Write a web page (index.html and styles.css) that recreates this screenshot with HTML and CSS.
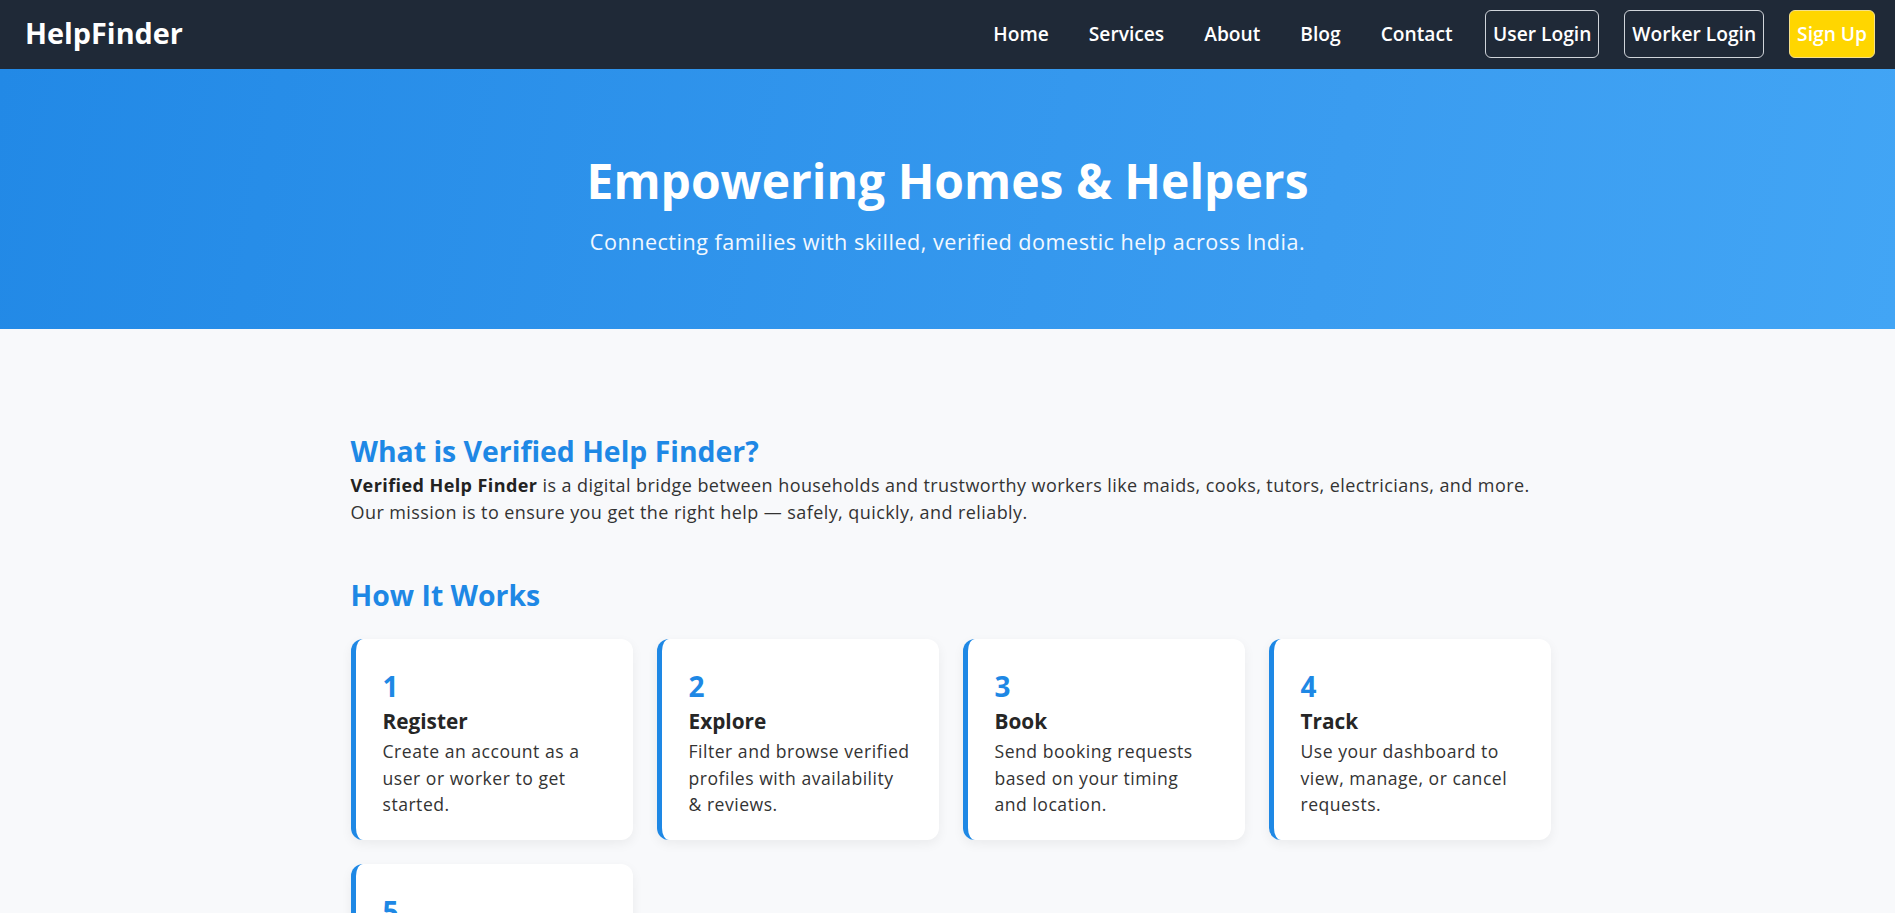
FILE: index.html
```html
<!DOCTYPE html>
<html lang="en">
<head>
<meta charset="utf-8">
<title>HelpFinder</title>
<link rel="stylesheet" href="styles.css">
</head>
<body>
<header class="navbar">
  <div class="logo">HelpFinder</div>
  <nav class="nav-links">
    <a class="nav-link" href="#">Home</a>
    <a class="nav-link" href="#">Services</a>
    <a class="nav-link" href="#">About</a>
    <a class="nav-link" href="#">Blog</a>
    <a class="nav-link" href="#">Contact</a>
    <a class="nav-btn" href="#">User Login</a>
    <a class="nav-btn" href="#">Worker Login</a>
    <a class="nav-btn signup" href="#">Sign Up</a>
  </nav>
</header>

<section class="hero">
  <h1 class="hero-title">Empowering Homes &amp; Helpers</h1>
  <p class="hero-sub">Connecting families with skilled, verified domestic help across India.</p>
</section>

<main class="main">
  <div class="container">
    <h2 class="section-title">What is Verified Help Finder?</h2>
    <p class="intro"><strong>Verified Help Finder</strong> is a digital bridge between households and trustworthy workers like maids, cooks, tutors, electricians, and more.<br>Our mission is to ensure you get the right help — safely, quickly, and reliably.</p>

    <h2 class="section-title how">How It Works</h2>
    <div class="steps">
      <div class="step">
        <div class="step-num">1</div>
        <h3 class="step-title">Register</h3>
        <p class="step-text">Create an account as a<br>user or worker to get<br>started.</p>
      </div>
      <div class="step">
        <div class="step-num">2</div>
        <h3 class="step-title">Explore</h3>
        <p class="step-text">Filter and browse verified<br>profiles with availability<br>&amp; reviews.</p>
      </div>
      <div class="step">
        <div class="step-num">3</div>
        <h3 class="step-title">Book</h3>
        <p class="step-text">Send booking requests<br>based on your timing<br>and location.</p>
      </div>
      <div class="step">
        <div class="step-num">4</div>
        <h3 class="step-title">Track</h3>
        <p class="step-text">Use your dashboard to<br>view, manage, or cancel<br>requests.</p>
      </div>
      <div class="step">
        <div class="step-num">5</div>
        <h3 class="step-title">Review</h3>
        <p class="step-text">Rate and review workers<br>after the job is done.</p>
      </div>
    </div>
  </div>
</main>
</body>
</html>
```

FILE: styles.css
```css
* { box-sizing: border-box; }

body {
  margin: 0;
  font-family: "Open Sans", "Noto Sans", sans-serif;
  background: #f8f9fb;
  color: #333;
}

.navbar {
  height: 69px;
  background: #1f2937;
  display: flex;
  align-items: center;
  justify-content: space-between;
  padding: 0 20px 2px 25px;
}

.logo {
  color: #fff;
  font-weight: 700;
  font-size: 28.8px;
  line-height: 1;
}

.nav-links {
  display: flex;
  align-items: center;
  gap: 25px;
}

.nav-link, .nav-btn {
  color: #fff;
  text-decoration: none;
  font-weight: 600;
  font-size: 19.2px;
  line-height: 24px;
  padding: 12px 7.5px;
}

.nav-btn {
  border: 1px solid #d0d4da;
  border-radius: 6px;
  padding: 11px 7px;
}

.nav-btn.signup {
  background: #ffd600;
  border-color: #f5e08a;
}

.hero {
  background: linear-gradient(100deg, #2289e6 0%, #3a9cf0 70%, #42a5f5 100%);
  color: #fff;
  text-align: center;
  padding: 83px 20px 72px;
}

.hero-title {
  margin: 0 0 16px;
  font-size: 48px;
  line-height: 1.2;
  font-weight: 700;
}

.hero-sub {
  margin: 0;
  font-size: 21.6px;
  line-height: 31px;
  letter-spacing: 0.5px;
  color: #f2f8ff;
}

.main {
  padding: 105px 0 60px;
}

.container {
  width: 1206px;
  margin: 0 auto;
  padding-left: 6px;
}

.section-title {
  color: #1e88e5;
  font-size: 28.4px;
  line-height: 1.2;
  font-weight: 700;
  margin: 0 0 4px;
}

.section-title.how {
  margin-top: 52px;
  margin-bottom: 27px;
}

.intro {
  margin: 0;
  font-size: 18px;
  line-height: 27.3px;
  letter-spacing: 0.42px;
  color: #333;
}

.intro strong {
  color: #222;
}

.steps {
  display: grid;
  grid-template-columns: repeat(4, 1fr);
  gap: 24px;
}

.step {
  background: #fff;
  border-left: 5px solid #1e88e5;
  border-radius: 12px;
  padding: 31px 20px 22px 27px;
  box-shadow: 0 4px 12px rgba(0, 0, 0, 0.06);
}

.step-num {
  color: #1e88e5;
  font-size: 28px;
  font-weight: 700;
  line-height: 1.2;
  margin-bottom: 5px;
}

.step-title {
  margin: 0 0 4px;
  font-size: 20.8px;
  line-height: 1.2;
  font-weight: 700;
  color: #262626;
}

.step-text {
  margin: 0;
  font-size: 17.6px;
  line-height: 26.8px;
  letter-spacing: 0.5px;
  color: #333;
}
```
